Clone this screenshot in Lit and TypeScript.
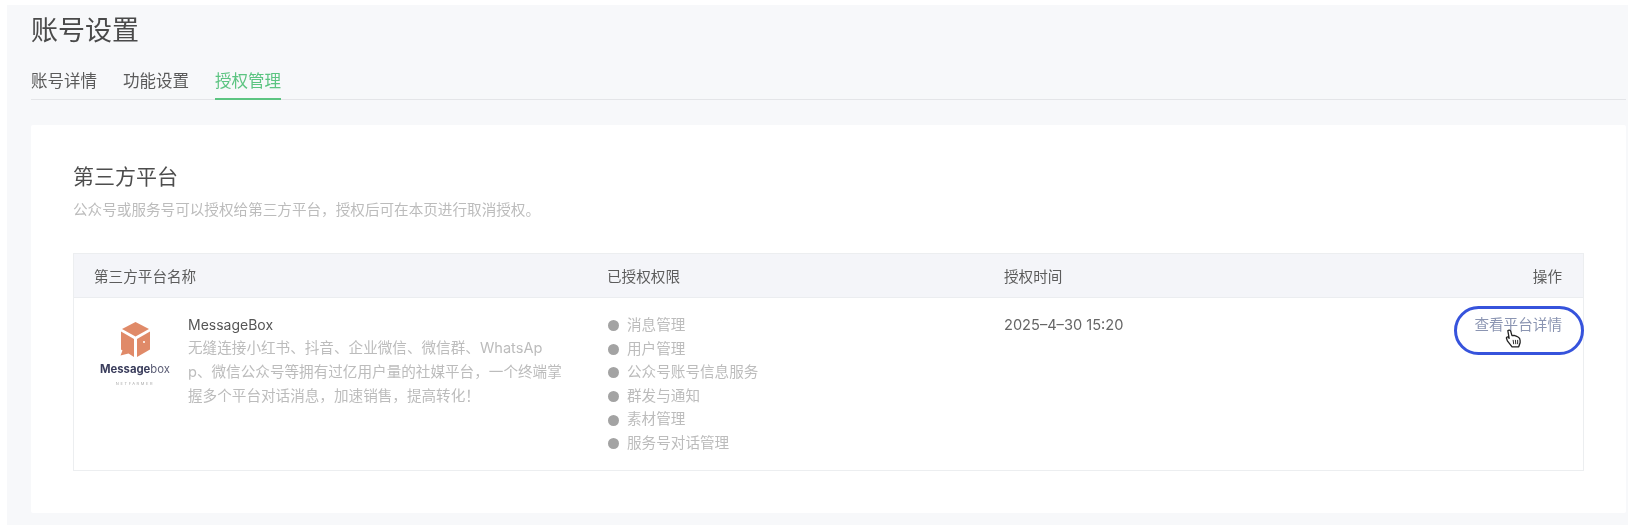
import { LitElement, html, css, svg } from "lit";
import { customElement } from "lit/decorators.js";

const perms = ["消息管理", "用户管理", "公众号账号信息服务", "群发与通知", "素材管理", "服务号对话管理"];

@customElement("app-root")
export class AppRoot extends LitElement {
  static styles = css`
    :host {
      display: block;
      width: 1638px;
      height: 526px;
      overflow: hidden;
      background: #fff;
      font-family: "Inter", "Noto Sans CJK SC", sans-serif;
      color: #333;
      box-sizing: border-box;
      padding: 5px 10px 0 7px;
    }
    .panel {
      background: #f7f8fa;
      height: 520px;
      padding: 0 2px 0 24px;
      box-sizing: border-box;
      filter: blur(0.4px);
    }
    h1 {
      margin: 0;
      padding-top: 8px;
      font-size: 27px;
      line-height: 36px;
      font-weight: 400;
      color: #4a4a4a;
    }
    .tabs {
      display: flex;
      gap: 26px;
      margin-top: 20px;
      border-bottom: 1px solid #e4e5e8;
      height: 30px;
    }
    .tab {
      font-size: 16.5px;
      line-height: 24px;
      color: #5a5a5a;
      height: 30px;
      box-sizing: border-box;
    }
    .tab.on {
      color: #5cc481;
      border-bottom: 2px solid #5cc481;
      height: 31px;
    }
    .card {
      margin-top: 25px;
      background: #fff;
      height: 388px;
      padding: 37px 42px 0 42px;
      box-sizing: border-box;
      border-radius: 2px;
    }
    h2 {
      margin: 0;
      font-size: 21px;
      line-height: 30px;
      font-weight: 400;
      color: #4d4d4d;
    }
    .sub {
      margin: 7px 0 0;
      font-size: 14.6px;
      line-height: 22px;
      color: #bcbcbc;
    }
    .table {
      margin-top: 32px;
      border: 1px solid #eceef0;
      position: relative;
      height: 218px;
      box-sizing: border-box;
    }
    .row {
      display: grid;
      grid-template-columns: 513px 397px 1fr auto;
    }
    .head {
      background: #f4f5f9;
      height: 44px;
      border-bottom: 1px solid #ebedf0;
      align-items: center;
      padding: 0 21px 0 20px;
      font-size: 14.6px;
      color: #5c5c5c;
      box-sizing: border-box;
    }
    .body {
      padding: 16px 21px 0 20px;
      font-size: 14.6px;
    }
    .platform { display: flex; gap: 12px; }
    .logo {
      width: 82px;
      flex: none;
      display: flex;
      flex-direction: column;
      align-items: center;
      padding-top: 8px;
    }
    .logo svg { display: block; }
    .brand {
      font-size: 11.3px;
      line-height: 12px;
      font-weight: 700;
      color: #3a3d5c;
      margin-top: 6px;
      font-family: "Inter", sans-serif;
      white-space: nowrap;
    }
    .brand span { font-weight: 400; color: #5b5d75; }
    .tiny {
      font-size: 4px;
      line-height: 4px;
      letter-spacing: 1.6px;
      color: #aaa;
      margin-top: 7px;
      white-space: nowrap;
    }
    .text { margin-top: -1px; }
    .name { line-height: 24px; color: #555; font-size: 14px; }
    .desc {
      line-height: 23.8px;
      color: #bcbcbc;
      white-space: nowrap;
    }
    .perms { list-style: none; margin: 0 0 0 1px; padding: 0; }
    .perms li {
      display: flex;
      align-items: center;
      gap: 8px;
      line-height: 23.6px;
      color: #bcbcbc;
      white-space: nowrap;
    }
    .dot { width: 11px; height: 11px; border-radius: 50%; background: #a3a3a3; }
    .time { line-height: 24px; color: #666; margin-top: -1px; }
    .op { line-height: 24px; color: #8b95b2; margin-top: -1px; }
    .oval {
      position: absolute;
      right: -1px;
      top: 52px;
      width: 130px;
      height: 49px;
      border: 3px solid #3653dc;
      border-radius: 25px;
      box-sizing: border-box;
    }
    .hand { position: absolute; left: 1431px; top: 75px; }
  `;

  private logo() {
    return svg`<svg width="31" height="35" viewBox="0 0 31 35">
      <path d="M15.5 0 L29 7 L15.5 14.5 L2 7 Z" fill="#e08a68"/>
      <path d="M1 9.5 L14 17 V35 L8.5 31.5 L.5 33.5 L2.5 28.5 L1 27.5 Z" fill="#e08a68"/>
      <path d="M17 17 L30 9.5 V27.5 L17 35 Z" fill="#e08a68"/>
      <circle cx="24" cy="20" r="1" fill="#fff"/>
    </svg>`;
  }

  private hand() {
    return svg`<svg class="hand" width="17" height="19" viewBox="0 0 18 20">
      <path d="M3 1.8 C4 .6 5.6 1 6 2.2 L7.4 7 L9.6 6.6 L11.8 7.4 L13.8 8.4 C15.4 9.2 16 10.4 16 12 V14.5 L14.5 18.8 H7.5 L2.5 12.5 L1.5 9.5 C1.3 8.4 2.6 8 3.5 8.8 L4.4 9.8 Z" fill="#fff" stroke="#222" stroke-width="1.4" stroke-linejoin="round"/>
      <path d="M8.6 11.5 L9.2 16 M11 11.5 L11.4 16 M13.4 11.5 V16" stroke="#222" stroke-width="1"/>
    </svg>`;
  }

  render() {
    return html`
      <div class="panel">
        <h1>账号设置</h1>
        <div class="tabs">
          <div class="tab">账号详情</div>
          <div class="tab">功能设置</div>
          <div class="tab on">授权管理</div>
        </div>
        <div class="card">
          <h2>第三方平台</h2>
          <p class="sub">公众号或服务号可以授权给第三方平台，授权后可在本页进行取消授权。</p>
          <div class="table">
            <div class="row head">
              <div>第三方平台名称</div>
              <div>已授权权限</div>
              <div>授权时间</div>
              <div>操作</div>
            </div>
            <div class="row body">
              <div class="platform">
                <div class="logo">
                  ${this.logo()}
                  <div class="brand">Message<span>box</span></div>
                  <div class="tiny">NETFARMER</div>
                </div>
                <div class="text">
                  <div class="name">MessageBox</div>
                  <div class="desc">无缝连接小红书、抖音、企业微信、微信群、WhatsAp<br />p、微信公众号等拥有过亿用户量的社媒平台，一个终端掌<br />握多个平台对话消息，加速销售，提高转化！</div>
                </div>
              </div>
              <ul class="perms">
                ${perms.map((p) => html`<li><span class="dot"></span>${p}</li>`)}
              </ul>
              <div class="time">2025–4–30 15:20</div>
              <div class="op">查看平台详情</div>
            </div>
            <div class="oval"></div>
            ${this.hand()}
          </div>
        </div>
      </div>
    `;
  }
}
